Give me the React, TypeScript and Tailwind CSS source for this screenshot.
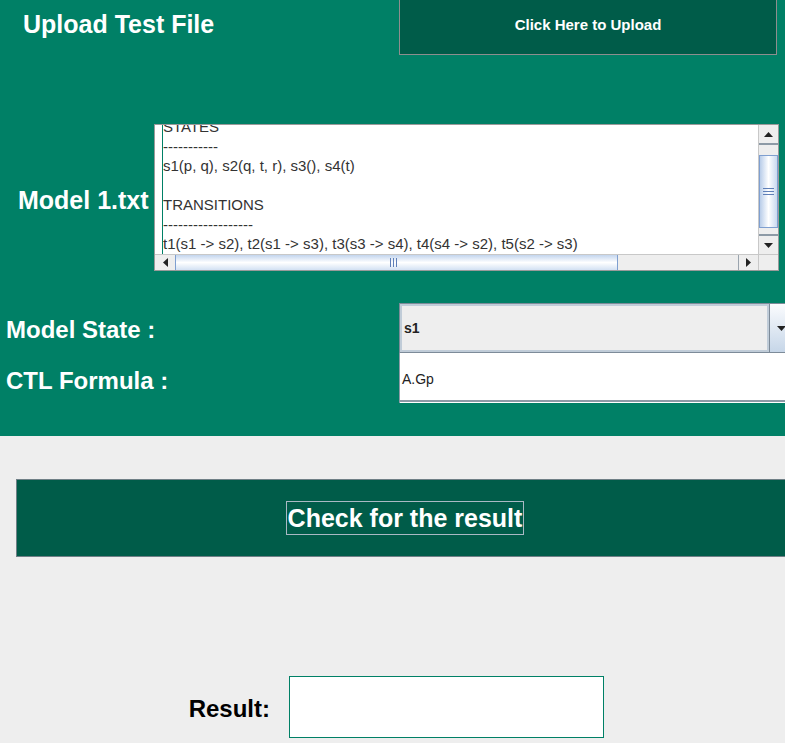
import React from "react";

type Dir = "up" | "down" | "left" | "right";

function Tri({ dir }: { dir: Dir }) {
  if (dir === "up" || dir === "down") {
    const pts = dir === "up" ? "0,5 9,5 4.5,0" : "0,0 9,0 4.5,5";
    return (
      <svg width="9" height="5" viewBox="0 0 9 5">
        <polygon points={pts} fill="#222" />
      </svg>
    );
  }
  const pts = dir === "left" ? "5,0 5,9 0,4.5" : "0,0 0,9 5,4.5";
  return (
    <svg width="5" height="9" viewBox="0 0 5 9">
      <polygon points={pts} fill="#222" />
    </svg>
  );
}

const lines = [
  "STATES",
  "-----------",
  "s1(p, q), s2(q, t, r), s3(), s4(t)",
  "",
  "TRANSITIONS",
  "------------------",
  "t1(s1 -> s2), t2(s1 -> s3), t3(s3 -> s4), t4(s4 -> s2), t5(s2 -> s3)",
];

export default function App() {
  return (
    <div className="w-[785px] h-[743px] overflow-hidden bg-[#eeeeee] font-['Liberation_Sans',Arial,sans-serif]">
      {/* Green panel */}
      <div className="h-[436px] bg-[#008066] flex flex-col">
        {/* Upload row */}
        <div className="flex h-[55px]">
          <div className="w-[399px] shrink-0 pl-[23px] pt-[8px] text-white font-bold text-[25px] leading-[32px]">
            Upload Test File
          </div>
          <div className="w-[378px] h-[55px] shrink-0 bg-[#005c49] border-x border-b border-[#8e8e8e] flex items-center justify-center pb-[3px] text-white font-bold text-[15px]">
            Click Here to Upload
          </div>
        </div>

        {/* Model file row */}
        <div className="flex h-[147px] mt-[69px]">
          <div className="w-[154px] shrink-0 pl-[18px] pt-[7px] flex items-center text-white font-bold text-[25px] whitespace-nowrap">
            Model 1.txt
          </div>
          <div className="w-[625px] h-[147px] shrink-0 border border-[#9a9a9a] flex flex-col bg-white">
            <div className="flex h-[129px]">
              {/* viewport */}
              <div className="w-[603px] h-[129px] overflow-hidden bg-white pl-[7px]">
                <div className="h-full border-l border-[#008066] overflow-hidden">
                  <div className="mt-[-8px] text-[15px] leading-[19.5px] text-[#333333] whitespace-nowrap">
                    {lines.map((l, i) => (
                      <div key={i} className="h-[19.5px]">
                        {l}
                      </div>
                    ))}
                  </div>
                </div>
              </div>
              {/* vertical scrollbar */}
              <div className="w-[20px] h-[129px] bg-[#eeeeee] border-l border-[#c8c8c8] flex flex-col">
                <div className="h-[20px] flex items-center justify-center border-b-2 border-[#8d9aa6] bg-[#eeeeee]">
                  <Tri dir="up" />
                </div>
                <div className="flex-1 bg-[#eeeeee] pt-[10px] pb-[4px]">
                  <div className="h-[73px] border border-[#7f9fd0] bg-gradient-to-r from-[#b9cde9] via-[#ffffff] to-[#c9d9ef] flex flex-col items-center justify-center gap-[2px]">
                    <div className="w-[11px] h-[1px] bg-[#5f7fb8]" />
                    <div className="w-[11px] h-[1px] bg-[#5f7fb8]" />
                    <div className="w-[11px] h-[1px] bg-[#5f7fb8]" />
                  </div>
                </div>
                <div className="h-[20px] flex items-center justify-center border-t-2 border-[#8d9aa6] bg-[#eeeeee]">
                  <Tri dir="down" />
                </div>
              </div>
            </div>
            {/* horizontal scrollbar row */}
            <div className="flex h-[16px]">
              <div className="w-[603px] h-[16px] flex bg-[#eeeeee] border-t border-[#c8c8c8]">
                <div className="w-[20px] flex items-center justify-center">
                  <Tri dir="left" />
                </div>
                <div className="flex-1 flex">
                  <div className="w-[443px] border-x border-[#7f9fd0] bg-gradient-to-b from-[#c3d5ee] via-[#ffffff] to-[#d3e1f3] flex items-center justify-center gap-[2px] pr-[6px]">
                    <div className="w-[1px] h-[9px] bg-[#5f7fb8]" />
                    <div className="w-[1px] h-[9px] bg-[#5f7fb8]" />
                    <div className="w-[1px] h-[9px] bg-[#5f7fb8]" />
                  </div>
                  <div className="flex-1 bg-[#eeeeee]" />
                </div>
                <div className="w-[20px] flex items-center justify-center border-l border-[#9aa4ae]">
                  <Tri dir="right" />
                </div>
              </div>
              <div className="w-[20px] h-[16px] bg-[#eeeeee] border-l border-t border-[#c8c8c8]" />
            </div>
          </div>
        </div>

        {/* Model state row */}
        <div className="flex h-[50px] mt-[32px]">
          <div className="w-[399px] shrink-0 pl-[6px] pt-[3px] flex items-center text-white font-bold text-[24px] whitespace-nowrap">
            Model State :
          </div>
          <div className="w-[392px] h-[50px] shrink-0 border border-[#7d8b99] flex">
            <div className="flex-1 border-2 border-[#c0ccd8] bg-[#eeeeee] flex items-center pl-[2px] text-[14px] font-bold text-[#222222]">
              s1
            </div>
            <div className="w-[21px] border-l border-[#7d8b99] bg-gradient-to-b from-[#fbfcfe] to-[#c6d6e8] flex items-center justify-center pl-[2px]">
              <Tri dir="down" />
            </div>
          </div>
        </div>

        {/* CTL formula row */}
        <div className="flex h-[50px]">
          <div className="w-[399px] shrink-0 pl-[6px] pt-[5px] flex items-center text-white font-bold text-[24px] whitespace-nowrap">
            CTL Formula :
          </div>
          <div className="w-[392px] h-[50px] shrink-0 border-l border-[#8d9aa6] flex flex-col">
            <div className="flex-1 bg-white border-b-2 border-[#8d9aa6] flex items-center pl-[2px] pt-[6px] text-[14px] text-[#222222]">
              A.Gp
            </div>
            <div className="h-[1px] bg-white" />
          </div>
        </div>
      </div>

      {/* Check button */}
      <div className="mt-[43px] ml-[16px] w-[790px] h-[78px] bg-[#005c49] border border-[#6f7f86] flex items-center justify-center pr-[12px]">
        <span className="border border-[#a9b9c4] px-[1px] leading-[32px] text-white font-bold text-[25px] whitespace-nowrap">
          Check for the result
        </span>
      </div>

      {/* Result row */}
      <div className="mt-[119px] flex items-center">
        <div className="w-[289px] shrink-0 pr-[19px] pt-[3px] text-right text-black font-bold text-[24px]">
          Result:
        </div>
        <div className="w-[315px] h-[62px] shrink-0 bg-white border border-[#008066]" />
      </div>
    </div>
  );
}
